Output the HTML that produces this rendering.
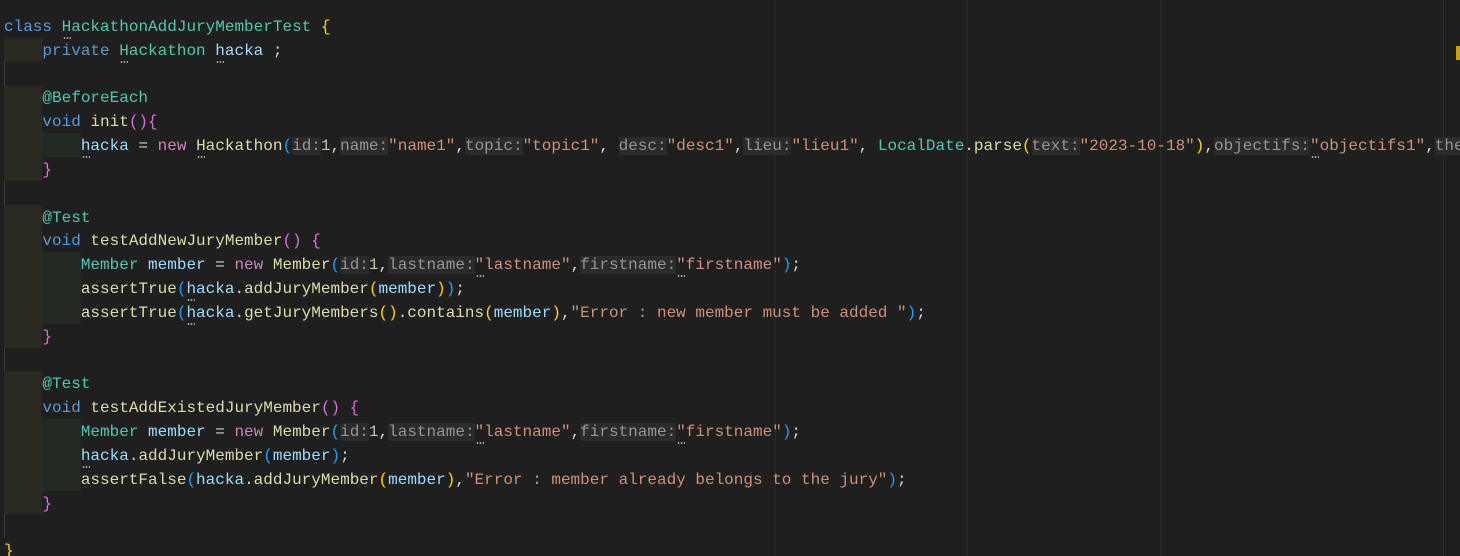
<!DOCTYPE html>
<html><head><meta charset="utf-8"><style>
html,body{margin:0;padding:0;background:#1f1f1f;width:1460px;height:556px;overflow:hidden;position:relative}
.code{position:absolute;left:4px;top:16px;font-family:"Liberation Mono",monospace;font-size:16px;color:#d4d4d4;white-space:normal}
.l{height:23.83px;line-height:23.83px;position:relative;white-space:pre}
.k{color:#569cd6}.t{color:#4ec9b0}.v{color:#9cdcfe}.f{color:#dcdcaa}.s{color:#ce9178}.n{color:#b5cea8}.c{color:#c586c0}
.b1{color:#ffd700}.b2{color:#da70d6}.b3{color:#179fff}
.h{color:#969696;background:#2b2b2b}
.d{position:relative}
.d::after{content:"";position:absolute;left:1px;top:19px;width:8px;height:2px;background-image:radial-gradient(circle,#a0a0a0 0.8px,transparent 1px);background-size:3px 2px}
.i1{position:absolute;left:4px;width:38px;background:#2a2a22}
.i2{position:absolute;left:42px;width:39px;background:#232a24}
.vl{position:absolute;top:0;width:1px;height:556px}
</style></head><body>
<div class="vl" style="left:775px;background:#1f3020"></div>
<div class="vl" style="left:967px;background:#2c2c2c"></div>
<div class="vl" style="left:1160px;background:#2c2c2c"></div>
<div class="vl" style="left:1443px;background:#2c2c2c"></div>
<div style="position:absolute;left:1456px;top:46px;width:4px;height:14px;background:#c5a300"></div>
<div style="position:absolute;left:4px;top:38px;width:1px;height:500px;background:#3c3c3c"></div>
<div class="i1" style="top:37.8px;height:23.8px"></div>
<div class="i1" style="top:85.5px;height:95.3px"></div>
<div class="i1" style="top:204.6px;height:143px"></div>
<div class="i1" style="top:371.4px;height:143px"></div>
<div class="i2" style="top:133.1px;height:23.8px"></div>
<div class="i2" style="top:252.3px;height:71.5px"></div>
<div class="i2" style="top:419px;height:71.5px"></div>
<div class="code"><div class="l"><span class="k">class</span> <span class="t d">HackathonAddJuryMemberTest</span> <span class="b1">{</span></div><div class="l">    <span class="k">private</span> <span class="t d">Hackathon</span> <span class="v d">hacka</span> ;</div><div class="l"> </div><div class="l">    <span class="t">@BeforeEach</span></div><div class="l">    <span class="k">void</span> <span class="f">init</span><span class="b2">(){</span></div><div class="l">        <span class="v d">hacka</span> = <span class="c">new</span> <span class="f d">Hackathon</span><span class="b3">(</span><span class="h">id:</span><span class="n">1</span>,<span class="h">name:</span><span class="s">"name1"</span>,<span class="h">topic:</span><span class="s">"topic1"</span>, <span class="h">desc:</span><span class="s">"desc1"</span>,<span class="h">lieu:</span><span class="s">"lieu1"</span>, <span class="t">LocalDate</span>.<span class="f">parse</span><span class="b1">(</span><span class="h">text:</span><span class="s">"2023-10-18"</span><span class="b1">)</span>,<span class="h">objectifs:</span><span class="s d">"objectifs1"</span>,<span class="h">the</span></div><div class="l">    <span class="b2">}</span></div><div class="l"> </div><div class="l">    <span class="t">@Test</span></div><div class="l">    <span class="k">void</span> <span class="f">testAddNewJuryMember</span><span class="b2">()</span> <span class="b2">{</span></div><div class="l">        <span class="t">Member</span> <span class="v">member</span> = <span class="c">new</span> <span class="f">Member</span><span class="b3">(</span><span class="h">id:</span><span class="n">1</span>,<span class="h">lastname:</span><span class="s d">"lastname"</span>,<span class="h">firstname:</span><span class="s d">"firstname"</span><span class="b3">)</span>;</div><div class="l">        <span class="f">assertTrue</span><span class="b3">(</span><span class="v d">hacka</span>.<span class="f">addJuryMember</span><span class="b1">(</span><span class="v">member</span><span class="b1">)</span><span class="b3">)</span>;</div><div class="l">        <span class="f">assertTrue</span><span class="b3">(</span><span class="v d">hacka</span>.<span class="f">getJuryMembers</span><span class="b1">()</span>.<span class="f">contains</span><span class="b1">(</span><span class="v">member</span><span class="b1">)</span>,<span class="s">"Error : new member must be added "</span><span class="b3">)</span>;</div><div class="l">    <span class="b2">}</span></div><div class="l"> </div><div class="l">    <span class="t">@Test</span></div><div class="l">    <span class="k">void</span> <span class="f">testAddExistedJuryMember</span><span class="b2">()</span> <span class="b2">{</span></div><div class="l">        <span class="t">Member</span> <span class="v">member</span> = <span class="c">new</span> <span class="f">Member</span><span class="b3">(</span><span class="h">id:</span><span class="n">1</span>,<span class="h">lastname:</span><span class="s d">"lastname"</span>,<span class="h">firstname:</span><span class="s d">"firstname"</span><span class="b3">)</span>;</div><div class="l">        <span class="v d">hacka</span>.<span class="f">addJuryMember</span><span class="b3">(</span><span class="v">member</span><span class="b3">)</span>;</div><div class="l">        <span class="f">assertFalse</span><span class="b3">(</span><span class="v">hacka</span>.<span class="f">addJuryMember</span><span class="b1">(</span><span class="v">member</span><span class="b1">)</span>,<span class="s">"Error : member already belongs to the jury"</span><span class="b3">)</span>;</div><div class="l">    <span class="b2">}</span></div><div class="l"> </div><div class="l"><span class="b1">}</span></div></div>
</body></html>
